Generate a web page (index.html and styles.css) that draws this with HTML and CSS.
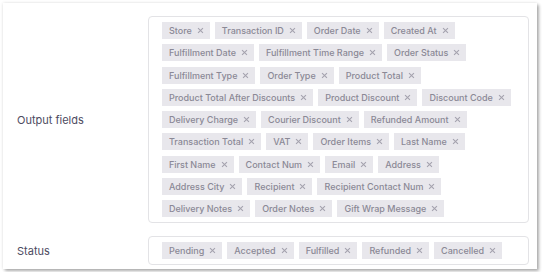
FILE: index.html
```html
<!DOCTYPE html>
<html lang="en">
<head>
    <meta charset="UTF-8">
    <meta name="viewport" content="width=device-width, initial-scale=1.0">
    <title>Export Settings</title>
    <link rel="stylesheet" href="styles.css">
</head>
<body>
    <div class="card">
        <div class="field-row">
            <div class="field-label">Output fields</div>
            <div class="tag-box">
                <div class="tag-line">
                    <span class="tag">Store<i class="x"></i></span>
                    <span class="tag">Transaction ID<i class="x"></i></span>
                    <span class="tag">Order Date<i class="x"></i></span>
                    <span class="tag">Created At<i class="x"></i></span>
                </div>
                <div class="tag-line">
                    <span class="tag">Fulfillment Date<i class="x"></i></span>
                    <span class="tag">Fulfillment Time Range<i class="x"></i></span>
                    <span class="tag">Order Status<i class="x"></i></span>
                </div>
                <div class="tag-line">
                    <span class="tag">Fulfillment Type<i class="x"></i></span>
                    <span class="tag">Order Type<i class="x"></i></span>
                    <span class="tag">Product Total<i class="x"></i></span>
                </div>
                <div class="tag-line">
                    <span class="tag">Product Total After Discounts<i class="x"></i></span>
                    <span class="tag">Product Discount<i class="x"></i></span>
                    <span class="tag">Discount Code<i class="x"></i></span>
                </div>
                <div class="tag-line">
                    <span class="tag">Delivery Charge<i class="x"></i></span>
                    <span class="tag">Courier Discount<i class="x"></i></span>
                    <span class="tag">Refunded Amount<i class="x"></i></span>
                </div>
                <div class="tag-line">
                    <span class="tag">Transaction Total<i class="x"></i></span>
                    <span class="tag">VAT<i class="x"></i></span>
                    <span class="tag">Order Items<i class="x"></i></span>
                    <span class="tag">Last Name<i class="x"></i></span>
                </div>
                <div class="tag-line">
                    <span class="tag">First Name<i class="x"></i></span>
                    <span class="tag">Contact Num<i class="x"></i></span>
                    <span class="tag">Email<i class="x"></i></span>
                    <span class="tag">Address<i class="x"></i></span>
                </div>
                <div class="tag-line">
                    <span class="tag">Address City<i class="x"></i></span>
                    <span class="tag">Recipient<i class="x"></i></span>
                    <span class="tag">Recipient Contact Num<i class="x"></i></span>
                </div>
                <div class="tag-line">
                    <span class="tag">Delivery Notes<i class="x"></i></span>
                    <span class="tag">Order Notes<i class="x"></i></span>
                    <span class="tag">Gift Wrap Message<i class="x"></i></span>
                </div>
            </div>
        </div>
        <div class="field-row">
            <div class="field-label">Status</div>
            <div class="tag-box">
                <div class="tag-line">
                    <span class="tag">Pending<i class="x"></i></span>
                    <span class="tag">Accepted<i class="x"></i></span>
                    <span class="tag">Fulfilled<i class="x"></i></span>
                    <span class="tag">Refunded<i class="x"></i></span>
                    <span class="tag">Cancelled<i class="x"></i></span>
                </div>
            </div>
        </div>
    </div>
</body>
</html>
```

FILE: styles.css
```css
* {
    margin: 0;
    padding: 0;
    box-sizing: border-box;
}

body {
    background: #fff;
    padding: 3px;
    font-family: Inter, 'Open Sans', sans-serif;
}

.card {
    width: 534px;
    height: 266px;
    background: #fff;
    padding: 13px 8px 0 14px;
    box-shadow: 0 0 3px rgba(0, 0, 0, 0.12), 2px 2px 3px rgba(0, 0, 0, 0.3);
    display: flex;
    flex-direction: column;
    gap: 13px;
}

.field-row {
    display: flex;
    align-items: center;
}

.field-label {
    width: 131px;
    flex-shrink: 0;
    font-size: 11px;
    color: #4d4b5f;
}

.tag-box {
    flex: 1;
    display: flex;
    flex-direction: column;
    gap: 5.3px;
    padding: 5px 12px 5px 13px;
    border: 1px solid #e3e3e6;
    border-radius: 4px;
}

.tag-line {
    display: flex;
    gap: 5px;
}

.tag {
    display: inline-flex;
    align-items: center;
    height: 17px;
    padding: 0 7px;
    background: #e8e7ec;
    color: #8b8996;
    font-size: 9px;
    font-weight: 500;
    white-space: nowrap;
}

.x {
    position: relative;
    width: 5px;
    height: 5px;
    margin-left: 6px;
}

.x::before,
.x::after {
    content: '';
    position: absolute;
    left: -1px;
    top: 2px;
    width: 7px;
    height: 1px;
    background: #a3a1ad;
    transform: rotate(45deg);
}

.x::after {
    transform: rotate(-45deg);
}
```
